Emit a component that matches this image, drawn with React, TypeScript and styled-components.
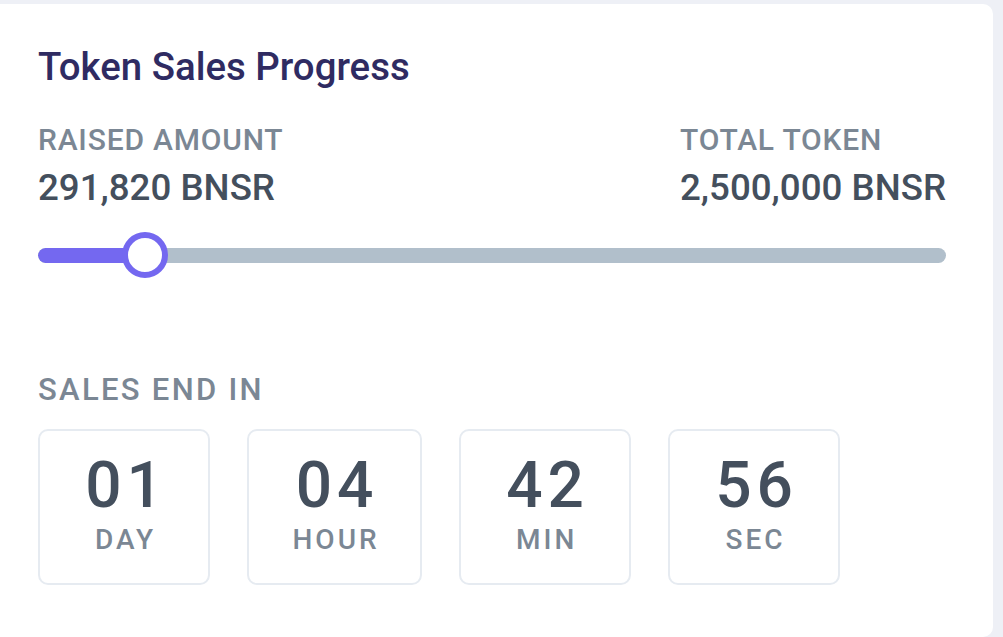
import styled, { createGlobalStyle } from 'styled-components';

const GlobalStyle = createGlobalStyle`
  html, body {
    margin: 0;
    padding: 0;
    background-color: #eef0f6;
    font-family: Roboto, 'Liberation Sans', sans-serif;
  }
`;

const countdown = [
  { value: '01', unit: 'DAY' },
  { value: '04', unit: 'HOUR' },
  { value: '42', unit: 'MIN' },
  { value: '56', unit: 'SEC' },
];

const raised = 291820;
const total = 2500000;

const App = () => {
  // thumb sits a bit past the real ratio, as in the design
  const progress = 0.118;

  return (
    <>
      <GlobalStyle />
      <Card>
        <Title>Token Sales Progress</Title>
        <Stats>
          <Stat>
            <Label>RAISED AMOUNT</Label>
            <Value>{raised.toLocaleString('en-US')} BNSR</Value>
          </Stat>
          <Stat>
            <Label>TOTAL TOKEN</Label>
            <Value>{total.toLocaleString('en-US')} BNSR</Value>
          </Stat>
        </Stats>
        <Slider>
          <Track>
            <Fill style={{ width: `${progress * 100}%` }} />
          </Track>
          <Thumb style={{ left: `${progress * 100}%` }} />
        </Slider>
        <SalesLabel>SALES END IN</SalesLabel>
        <Countdown>
          {countdown.map(item => (
            <TimeBox key={item.unit}>
              <TimeValue>{item.value}</TimeValue>
              <TimeUnit>{item.unit}</TimeUnit>
            </TimeBox>
          ))}
        </Countdown>
      </Card>
    </>
  );
};

const Card = styled.div`
  box-sizing: border-box;
  margin: 4px 10px 0 0;
  height: 633px;
  padding: 44px 47px 0 38px;
  background-color: #ffffff;
  border-radius: 0 10px 10px 0;
  display: flex;
  flex-direction: column;
`;

const Title = styled.h2`
  margin: 0;
  font-size: 38.4px;
  line-height: 1;
  font-weight: 500;
  color: #2f2b62;
`;

const Stats = styled.div`
  display: flex;
  justify-content: space-between;
  margin-top: 39px;
`;

const Stat = styled.div`
  display: flex;
  flex-direction: column;
  gap: 15px;
`;

const Label = styled.span`
  font-size: 30px;
  line-height: 1;
  font-weight: 500;
  color: #7b8794;
  letter-spacing: 0.8px;
`;

const Value = styled.span`
  font-size: 36.7px;
  line-height: 1;
  font-weight: 500;
  color: #444f5d;
`;

const Slider = styled.div`
  position: relative;
  height: 46px;
  margin-top: 25px;
  display: flex;
  align-items: center;
`;

const Track = styled.div`
  position: relative;
  width: 100%;
  height: 15px;
  border-radius: 8px;
  background-color: #b1bfcb;
  overflow: hidden;
`;

const Fill = styled.div`
  height: 100%;
  background-color: #7468f0;
  border-radius: 8px 0 0 8px;
`;

const Thumb = styled.div`
  position: absolute;
  top: 0;
  box-sizing: border-box;
  width: 46px;
  height: 46px;
  margin-left: -23px;
  border-radius: 50%;
  border: 6px solid #7468f0;
  background-color: #ffffff;
`;

const SalesLabel = styled.div`
  margin-top: 96px;
  font-size: 31px;
  line-height: 1;
  font-weight: 500;
  color: #7b8794;
  letter-spacing: 2.3px;
`;

const Countdown = styled.div`
  display: flex;
  gap: 37px;
  margin-top: 24px;
`;

const TimeBox = styled.div`
  box-sizing: border-box;
  min-width: 172px;
  height: 156px;
  padding: 23px 43.5px 0;
  border: 2px solid #e6ebf1;
  border-radius: 10px;
  display: flex;
  flex-direction: column;
  align-items: center;
`;

const TimeValue = styled.span`
  font-size: 64px;
  line-height: 1;
  font-weight: 500;
  color: #444f5d;
  letter-spacing: 5px;
  margin-right: -5px;
`;

const TimeUnit = styled.span`
  margin-top: 8px;
  font-size: 28px;
  line-height: 1;
  font-weight: 500;
  color: #7b8794;
  letter-spacing: 3px;
  margin-right: -3px;
`;

export default App;
